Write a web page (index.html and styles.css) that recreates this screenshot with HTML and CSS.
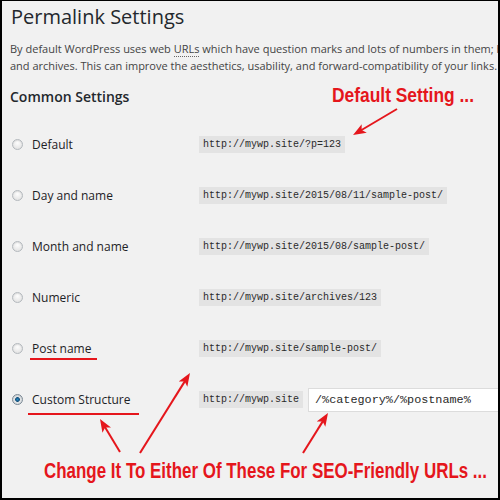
FILE: index.html
```html
<!DOCTYPE html>
<html lang="en">
<head>
<meta charset="utf-8">
<title>Permalink Settings</title>
<link rel="stylesheet" href="styles.css">
</head>
<body>
<div class="page">
  <div class="frame">
    <h1 class="title">Permalink Settings</h1>
    <p class="intro">By default WordPress uses web <abbr title="Universal Resource Locator">URLs</abbr> which have question marks and lots of numbers in them; however, WordPress offers you the ability to create a custom URL structure for your permalinks<br>and archives. This can improve the aesthetics, usability, and forward-compatibility of your links. A number of tags are available, and here are some examples to get you started.</p>
    <h2 class="section">Common Settings</h2>
    <div class="options">
      <div class="option">
        <label class="choice"><span class="radio"></span>Default</label>
        <div class="value"><code class="sample">http://mywp.site/?p=123</code></div>
      </div>
      <div class="option">
        <label class="choice"><span class="radio"></span>Day and name</label>
        <div class="value"><code class="sample">http://mywp.site/2015/08/11/sample-post/</code></div>
      </div>
      <div class="option">
        <label class="choice"><span class="radio"></span>Month and name</label>
        <div class="value"><code class="sample">http://mywp.site/2015/08/sample-post/</code></div>
      </div>
      <div class="option">
        <label class="choice"><span class="radio"></span>Numeric</label>
        <div class="value"><code class="sample">http://mywp.site/archives/123</code></div>
      </div>
      <div class="option">
        <label class="choice"><span class="radio"></span>Post name</label>
        <div class="value"><code class="sample">http://mywp.site/sample-post/</code></div>
      </div>
      <div class="option">
        <label class="choice"><span class="radio is-checked"></span>Custom Structure</label>
        <div class="value"><code class="sample">http://mywp.site</code><span class="structure">/%category%/%postname%</span></div>
      </div>
    </div>
  </div>

  <svg class="notes" width="500" height="500" viewBox="0 0 500 500">
    <defs>
      <marker id="head" markerUnits="userSpaceOnUse" markerWidth="14" markerHeight="11" refX="7" refY="5" orient="auto">
        <path d="M0,0 L13,5 L0,10 L3,5 Z" fill="#e5161c"/>
      </marker>
    </defs>
    <text class="note" x="332" y="102" font-size="20" textLength="142" lengthAdjust="spacingAndGlyphs">Default Setting ...</text>
    <line class="mark" x1="397" y1="109" x2="358.2" y2="132" marker-end="url(#head)"/>
    <line class="mark" x1="30" y1="359" x2="97" y2="359"/>
    <line class="mark" x1="28" y1="414" x2="139" y2="414"/>
    <line class="mark" x1="140" y1="453" x2="186.8" y2="378.1" marker-end="url(#head)"/>
    <line class="mark" x1="120" y1="452" x2="103.1" y2="424.1" marker-end="url(#head)"/>
    <line class="mark" x1="303" y1="453" x2="324.8" y2="418.1" marker-end="url(#head)"/>
    <text class="note" x="44" y="478" font-size="22" textLength="443" lengthAdjust="spacingAndGlyphs">Change It To Either Of These For SEO-Friendly URLs ...</text>
  </svg>
</div>
</body>
</html>
```

FILE: styles.css
```css
html, body {
  margin: 0;
  padding: 0;
  background: #f1f1f1;
}

.page {
  position: relative;
  width: 500px;
  height: 500px;
  overflow: hidden;
}

.frame {
  box-sizing: border-box;
  width: 500px;
  height: 500px;
  border: 2px solid #000;
  border-top-width: 1px;
  background: #f1f1f1;
  padding-left: 8px;
  overflow: hidden;
  font-family: "Open Sans", "Noto Sans", sans-serif;
  color: #444;
}

.title {
  margin: 0;
  padding-top: 2px;
  padding-left: 1px;
  font-size: 20px;
  line-height: 27px;
  font-weight: 400;
  color: #23282d;
}

.intro {
  margin: 11px 0 0;
  font-size: 11px;
  line-height: 16.5px;
  white-space: nowrap;
  color: #444;
}

.intro abbr {
  text-decoration: none;
  border-bottom: 1px dotted #666;
}

.section {
  margin: 13px 0 0;
  font-size: 14px;
  line-height: 20px;
  font-weight: 600;
  color: #23282d;
}

.options {
  margin-top: 12px;
}

.option {
  display: grid;
  grid-template-columns: 189px 1fr;
  align-items: center;
  height: 51px;
}

.choice {
  display: flex;
  align-items: center;
  gap: 9px;
  font-size: 12px;
  color: #1d2226;
}

.radio {
  box-sizing: border-box;
  width: 11px;
  height: 11px;
  margin-left: 2px;
  border-radius: 50%;
  border: 1px solid #b4b9be;
  background: radial-gradient(circle at 50% 35%, #fdfdfd 0, #e6e6e6 70%, #d6d6d6 100%);
  box-shadow: inset 0 1px 1px rgba(0, 0, 0, 0.08);
}

.radio.is-checked {
  border-color: #7c8a96;
  background: radial-gradient(circle at 50% 50%, #1f89c5 0, #17507a 32%, #e3e6e8 42%, #cfd3d6 100%);
}

.value {
  display: flex;
  align-items: center;
  white-space: nowrap;
}

.sample {
  display: inline-block;
  padding: 0 4px;
  height: 17px;
  line-height: 17px;
  font-family: "Liberation Mono", "DejaVu Sans Mono", monospace;
  font-size: 10px;
  color: #2a2a2a;
  background: #e3e3e3;
}

.structure {
  box-sizing: border-box;
  display: inline-block;
  margin-left: 5px;
  width: 250px;
  height: 24px;
  line-height: 22px;
  padding-left: 6px;
  border: 1px solid #dcdcdc;
  background: #fff;
  font-family: "Liberation Mono", "DejaVu Sans Mono", monospace;
  font-size: 11.8px;
  color: #2a2a2a;
}

.notes {
  position: absolute;
  top: 0;
  left: 0;
  pointer-events: none;
}

.note {
  font-family: "Liberation Sans", Arial, sans-serif;
  font-weight: 700;
  fill: #e5161c;
}

.mark {
  stroke: #e5161c;
  stroke-width: 2;
}
```
